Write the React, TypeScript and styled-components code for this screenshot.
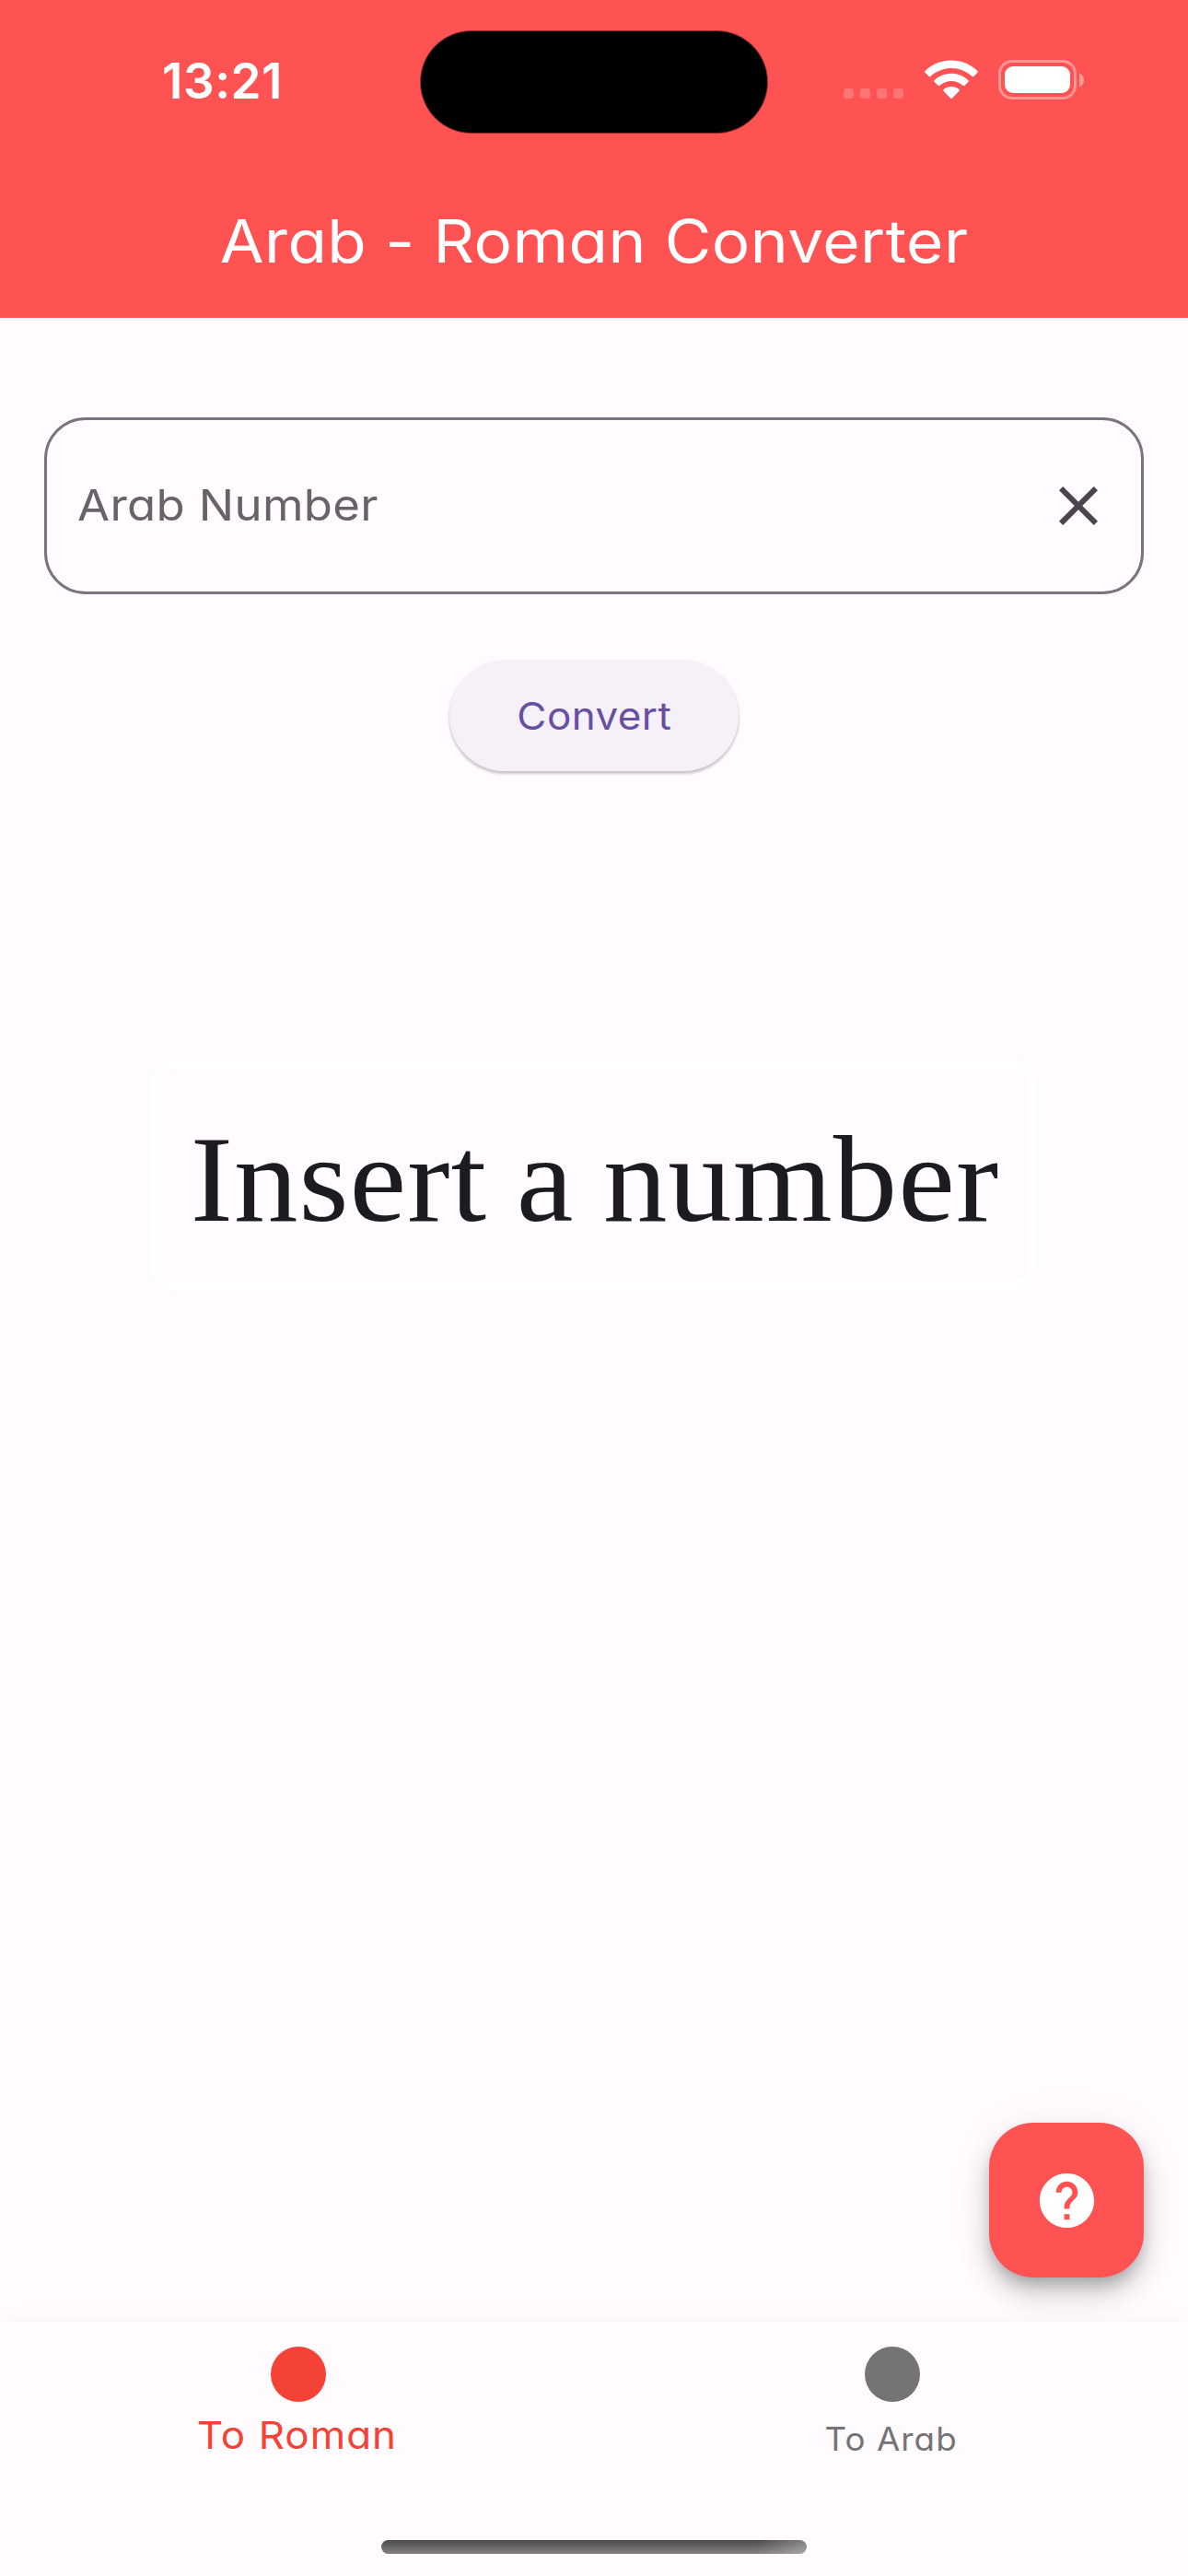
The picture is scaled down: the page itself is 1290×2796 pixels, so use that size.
import React from "react";
import styled, { createGlobalStyle } from "styled-components";
import { MdClose, MdHelp } from "react-icons/md";

const GlobalStyle = createGlobalStyle`
  * { box-sizing: border-box; }
  body {
    margin: 0;
    background: #fffbff;
    font-family: Inter, "Liberation Sans", sans-serif;
    font-feature-settings: "cv11" 1;
  }
  button, input { font: inherit; font-feature-settings: inherit; }
`;

const Screen = styled.div`
  width: 1290px;
  height: 2796px;
  display: flex;
  flex-direction: column;
  background: #fffbff;
  overflow: hidden;
`;

/* Widens the letterforms without changing their height. */
const Wide = styled.span<{ $by: number }>`
  display: inline-block;
  transform: scaleX(${(p) => p.$by});
`;

const Header = styled.header`
  height: 345px;
  flex: none;
  background: #ff5252;
  color: #fff;
`;

const StatusBar = styled.div`
  height: 177px;
  padding-top: 34px;
  display: grid;
  grid-template-columns: 457px 376px 457px;
  align-items: start;
`;

const Time = styled.div`
  padding-left: 176px;
  line-height: 108px;
  font-size: 53px;
  font-weight: 600;
  letter-spacing: 0.5px;
`;

const Island = styled.div`
  height: 110px;
  border-radius: 56px;
  background: #000;
  box-shadow: 0 0 0 1px rgba(0, 0, 0, 0.45);
`;

const StatusIcons = styled.div`
  display: flex;
  align-items: flex-end;
  padding: 31px 0 0 83px;
`;

const SignalDots = styled.div`
  display: flex;
  gap: 7px;
  margin: 0 23px 1px 0;
`;

const Dot = styled.i`
  width: 11px;
  height: 11px;
  border-radius: 3px;
  background: rgba(255, 255, 255, 0.2);
`;

const WifiIcon = styled.svg`
  width: 58px;
  height: 43px;
  margin-right: 22px;
`;

const Battery = styled.div`
  display: flex;
  align-items: center;
  gap: 3px;
`;

const BatteryShell = styled.div`
  width: 85px;
  height: 43px;
  padding: 4px;
  border: 3px solid rgba(255, 255, 255, 0.4);
  border-radius: 15px;
`;

const BatteryFill = styled.div`
  height: 100%;
  border-radius: 9px;
  background: #fff;
`;

const BatteryTip = styled.div`
  width: 5px;
  height: 14px;
  border-radius: 0 5px 5px 0 / 0 7px 7px 0;
  background: rgba(255, 255, 255, 0.4);
`;

const Title = styled.h1`
  margin: 0;
  padding: 1px 0 0 1px;
  line-height: 168px;
  text-align: center;
  font-size: 64px;
  font-weight: 400;
  letter-spacing: 0.4px;
  white-space: nowrap;
`;

const Main = styled.main`
  flex: 1;
  display: flex;
  flex-direction: column;
  align-items: center;
  padding: 108px 48px 48px;
`;

const Field = styled.label`
  width: 100%;
  height: 192px;
  display: flex;
  align-items: center;
  justify-content: space-between;
  padding: 0 32px 0 33px;
  border: 3px solid #79747e;
  border-radius: 45px;
`;

const NumberInput = styled.input`
  width: 900px;
  padding: 0 0 2px;
  border: 0;
  outline: 0;
  background: none;
  font-size: 46.5px;
  line-height: 72px;
  letter-spacing: 0.3px;
  color: #1c1b1f;
  transform: scaleX(1.095);
  transform-origin: left;
  &::placeholder { color: #666468; opacity: 1; }
`;

const ClearButton = styled.button`
  display: flex;
  padding: 0;
  border: 0;
  background: none;
  color: #49454f;
`;

const ConvertButton = styled.button`
  width: 314px;
  height: 120px;
  margin-top: 72px;
  padding: 0 0 0 1px;
  border: 0;
  border-radius: 60px;
  background: #f6f1f9;
  box-shadow: 0 3px 3px rgba(0, 0, 0, 0.18), 0 1px 4px rgba(0, 0, 0, 0.08);
  color: #6750a4;
  font-size: 41px;
  letter-spacing: 0.4px;
`;

const Result = styled.output`
  width: 960px;
  height: 251px;
  margin-top: 313px;
  padding: 9px 0 0 1px;
  border: 10px solid #fff;
  border-radius: 24px;
  font-family: "Liberation Serif", serif;
  font-size: 134px;
  line-height: 222px;
  letter-spacing: 1px;
  word-spacing: -4px;
  text-align: center;
  white-space: nowrap;
  color: #1c1b1f;
`;

const HelpButton = styled.button`
  width: 168px;
  height: 168px;
  margin-top: auto;
  align-self: flex-end;
  display: flex;
  align-items: center;
  justify-content: center;
  padding: 0 0 0 1px;
  border: 0;
  border-radius: 48px;
  background: #ff5252;
  color: #fff;
  box-shadow: 0 9px 15px -3px rgba(0, 0, 0, 0.2), 0 18px 30px rgba(0, 0, 0, 0.18),
    0 3px 54px rgba(0, 0, 0, 0.05);
`;

const NavBar = styled.nav`
  position: relative;
  height: 276px;
  flex: none;
  display: grid;
  grid-template-columns: 1fr 1fr;
  grid-template-rows: 237px 15px;
  background: #fffbff;
  box-shadow: 0 0 26px rgba(0, 0, 0, 0.04);
`;

const NavItem = styled.a<{ $active?: boolean }>`
  display: flex;
  flex-direction: column;
  align-items: center;
  padding-top: 27px;
  color: ${(p) => (p.$active ? "#f44336" : "#757376")};
  font-size: ${(p) => (p.$active ? 41 : 35)}px;
  line-height: ${(p) => (p.$active ? 73 : 81)}px;
  letter-spacing: 1px;
`;

const NavDot = styled.span`
  width: 60px;
  height: 60px;
  margin-left: 3px;
  border-radius: 50%;
  background: currentColor;
`;

const HomeIndicator = styled.div`
  grid-column: 1 / -1;
  justify-self: center;
  width: 462px;
  border-radius: 8px;
  background: linear-gradient(100deg, transparent 88%, rgba(255, 255, 255, 0.3)),
    linear-gradient(#4a4b4a, #858184);
`;

export default function App() {
  return (
    <Screen>
      <GlobalStyle />
      <Header>
        <StatusBar>
          <Time>13:21</Time>
          <Island />
          <StatusIcons>
            <SignalDots>
              {[0, 1, 2, 3].map((n) => (
                <Dot key={n} />
              ))}
            </SignalDots>
            <WifiIcon viewBox="0 0 58 43" fill="#fff">
              <path d="M1 11.6C16.500-3.300 41.500-3.300 57 11.600Q58.300 12.900 57 14.200L53.300 18Q52.500 18.700 51.500 17.800C38.500 6 19.500 6 6.500 17.800Q5.500 18.700 4.700 18L1 14.200Q-.3 12.900 1 11.600Z" />
              <path d="M11 21.700C21 12.500 37 12.500 47 21.700Q48.300 22.900 47 24.200L43.300 27.900Q42.500 28.600 41.500 27.800C34.500 21.500 23.500 21.500 16.500 27.800Q15.500 28.600 14.700 27.900L11 24.200Q9.700 22.900 11 21.700Z" />
              <path d="M20.900 31.800C25.200 28.200 32.800 28.200 37.100 31.800Q38.400 32.900 37.100 34.200L30 41.500Q29 42.500 28 41.500L20.900 34.200Q19.600 32.900 20.900 31.800Z" />
            </WifiIcon>
            <Battery>
              <BatteryShell>
                <BatteryFill />
              </BatteryShell>
              <BatteryTip />
            </Battery>
          </StatusIcons>
        </StatusBar>
        <Title>
          <Wide $by={1.083}>Arab - Roman Converter</Wide>
        </Title>
      </Header>
      <Main>
        <Field>
          <NumberInput placeholder="Arab Number" />
          <ClearButton aria-label="Clear">
            <MdClose size={72} />
          </ClearButton>
        </Field>
        <ConvertButton>
          <Wide $by={1.072}>Convert</Wide>
        </ConvertButton>
        <Result>
          <Wide $by={1.036}>Insert a number</Wide>
        </Result>
        <HelpButton aria-label="Help">
          <MdHelp size={71} />
        </HelpButton>
      </Main>
      <NavBar>
        <NavItem $active>
          <NavDot />
          <Wide $by={1.07}>To Roman</Wide>
        </NavItem>
        <NavItem>
          <NavDot />
          <Wide $by={1.05}>To Arab</Wide>
        </NavItem>
        <HomeIndicator />
      </NavBar>
    </Screen>
  );
}
